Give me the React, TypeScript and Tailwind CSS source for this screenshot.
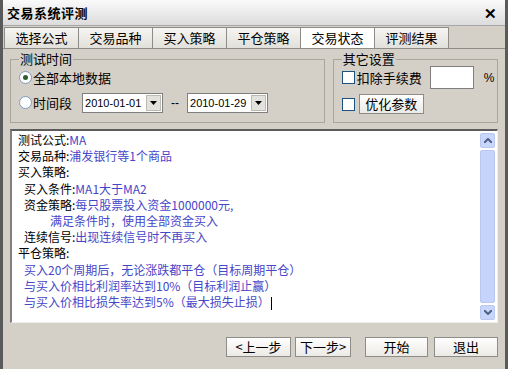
import React from "react";

const tabs = ["选择公式", "交易品种", "买入策略", "平仓策略", "交易状态", "评测结果"];
const ACTIVE = 4;

function Radio({ checked }: { checked?: boolean }) {
  return (
    <span className="flex h-[13px] w-[13px] shrink-0 items-center justify-center rounded-full border border-[#7f9db9] bg-white">
      {checked && <span className="h-[5px] w-[5px] rounded-full bg-[#2d5e2d]" />}
    </span>
  );
}

function Check() {
  return <span className="block h-[13px] w-[13px] shrink-0 border border-[#1c5180] bg-white" />;
}

function DateBox({ value }: { value: string }) {
  return (
    <div className="flex h-[20px] w-[81px] shrink-0 items-stretch border border-[#7f7f7f] bg-white">
      <span className="flex-1 overflow-hidden whitespace-nowrap pl-[2px] font-['Liberation_Sans',sans-serif] text-[11px] leading-[18px]">{value}</span>
      <span className="m-[1px] flex w-[15px] items-center justify-center border border-[#bdbab1] bg-[#e4e2dc]">
        <svg width="7" height="4" viewBox="0 0 7 4">
          <path d="M0 0h7L3.5 4z" fill="#000" />
        </svg>
      </span>
    </div>
  );
}

function Btn({ children, className = "" }: { children: React.ReactNode; className?: string }) {
  return (
    <button
      type="button"
      className={`flex h-[20px] shrink-0 items-center justify-center whitespace-nowrap border border-[#8e8c87] bg-gradient-to-b from-white to-[#eceae6] text-[12px] text-black ${className}`}
    >
      {children}
    </button>
  );
}

const K = "text-black";
const V = "text-[#4646c8]";

export default function App() {
  return (
    <div className="h-[369px] w-[508px] overflow-hidden border-x-[3px] border-[#5a5a5a] bg-[#d4d0c8] font-['Noto_Sans_CJK_SC',sans-serif] text-[12px] text-black">
      {/* title bar */}
      <div className="flex h-[26px] items-center justify-between border-b border-[#a8a8a8] bg-gradient-to-b from-[#fafafa] to-[#dcdcdc] pl-[4px] pr-[8px]">
        <span className="text-[13px] font-bold tracking-[0.5px]">交易系统评测</span>
        <span className="text-[15px] font-bold leading-none">✕</span>
      </div>

      {/* tabs */}
      <div className="mt-[1px] flex h-[21px] items-stretch pl-[1px]">
        {tabs.map((t, i) => (
          <div
            key={t}
            className={`flex w-[75px] items-center justify-center border border-b-0 border-[#8e8c87] text-[13px] ${
              i === ACTIVE ? "bg-white" : "bg-gradient-to-b from-[#f6f5f2] to-[#e2e0da]"
            } ${i > 0 ? "-ml-px" : ""}`}
          >
            {t}
          </div>
        ))}
      </div>

      {/* panel */}
      <div className="flex flex-col border-t border-[#8e8c87] px-[7px]">
        <div className="mt-[3px] flex gap-[8px]">
          <fieldset className="h-[71px] w-[316px] border border-[#a9a6a0] px-[8px]">
            <legend className="px-[1px] text-[13px] leading-[14px]">测试时间</legend>
            <div className="mt-[2px] flex items-center gap-[1px] whitespace-nowrap">
              <Radio checked />
              <span className="text-[13px]">全部本地数据</span>
            </div>
            <div className="mt-[5px] flex items-center whitespace-nowrap">
              <Radio />
              <span className="ml-[1px] text-[13px]">时间段</span>
              <span className="ml-[10px]"><DateBox value="2010-01-01" /></span>
              <span className="mx-[8px] font-['Liberation_Sans',sans-serif]">--</span>
              <DateBox value="2010-01-29" />
            </div>
          </fieldset>
          <fieldset className="h-[71px] w-[166px] border border-[#a9a6a0] pl-[8px] pr-0">
            <legend className="px-[1px] text-[13px] leading-[14px]">其它设置</legend>
            <div className="flex items-center whitespace-nowrap">
              <Check />
              <span className="ml-[2px] text-[13px]">扣除手续费</span>
              <span className="ml-[8px] h-[23px] w-[44px] shrink-0 border border-[#7f7f7f] bg-white" />
              <span className="ml-[10px] font-['Liberation_Sans',sans-serif]">%</span>
            </div>
            <div className="mt-[5px] flex items-center">
              <Check />
              <Btn className="ml-[4px] w-[65px] text-[13px]">优化参数</Btn>
            </div>
          </fieldset>
        </div>

        {/* report */}
        <div className="mt-[6px] flex h-[194px] border-2 border-b border-r border-l-[#808080] border-t-[#5c5c5c] border-r-[#f0f0f0] border-b-[#f0f0f0] bg-white">
          <div className="flex-1 pl-[6px] pt-[1px] text-[12px] leading-[16.2px]">
            <div><span className={K}>测试公式:</span><span className={V}>MA</span></div>
            <div><span className={K}>交易品种:</span><span className={V}>浦发银行等1个商品</span></div>
            <div className={K}>买入策略:</div>
            <div className="pl-[6px]"><span className={K}>买入条件:</span><span className={V}>MA1大于MA2</span></div>
            <div className="pl-[6px]"><span className={K}>资金策略:</span><span className={V}>每只股票投入资金1000000元,</span></div>
            <div className={`pl-[32px] ${V}`}>满足条件时，使用全部资金买入</div>
            <div className="pl-[6px]"><span className={K}>连续信号:</span><span className={V}>出现连续信号时不再买入</span></div>
            <div className={K}>平仓策略:</div>
            <div className={`pl-[6px] ${V}`}>买入20个周期后，无论涨跌都平仓（目标周期平仓）</div>
            <div className={`pl-[6px] ${V}`}>与买入价相比利润率达到10%（目标利润止赢）</div>
            <div className={`pl-[6px] ${V}`}>
              与买入价相比损失率达到5%（最大损失止损）<span className="ml-[1px] inline-block h-[13px] w-px bg-black align-middle" />
            </div>
          </div>
          {/* scrollbar */}
          <div className="my-[2px] mr-[2px] flex w-[15px] flex-col gap-[2px]">
            <div className="flex h-[15px] items-center justify-center rounded-[2px] border border-[#b8c8f0] bg-[#c8d6fb]">
              <svg width="8" height="5" viewBox="0 0 8 5"><path d="M0 5 4 1 8 5" fill="none" stroke="#4d6185" strokeWidth="2" /></svg>
            </div>
            <div className="flex-1 rounded-[2px] border border-[#b8c8f0] bg-[#c6d3fa]" />
            <div className="flex h-[15px] items-center justify-center rounded-[2px] border border-[#b8c8f0] bg-[#c8d6fb]">
              <svg width="8" height="5" viewBox="0 0 8 5"><path d="M0 0 4 4 8 0" fill="none" stroke="#4d6185" strokeWidth="2" /></svg>
            </div>
          </div>
        </div>

        {/* buttons */}
        <div className="mt-[14px] flex justify-end gap-[4px]">
          <Btn className="w-[65px] text-[13px]">&lt;上一步</Btn>
          <Btn className="w-[56px] text-[13px]">下一步&gt;</Btn>
          <Btn className="ml-[10px] w-[63px] text-[13px]">开始</Btn>
          <Btn className="ml-[2px] w-[64px] text-[13px]">退出</Btn>
        </div>
      </div>
    </div>
  );
}
